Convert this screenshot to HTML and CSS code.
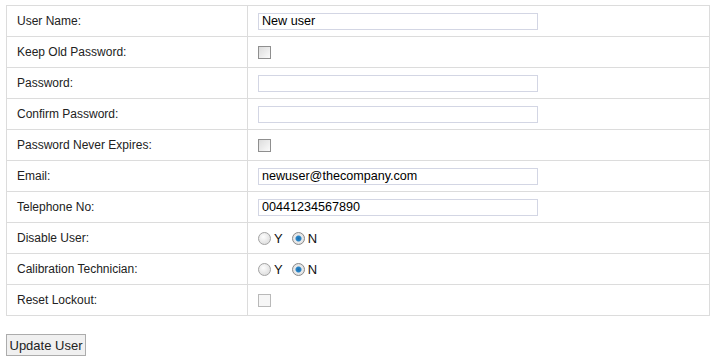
FILE: index.html
```html
<!DOCTYPE html>
<html lang="en">
<head>
  <meta charset="UTF-8" />
  <title>Edit User</title>
  <link rel="stylesheet" href="styles.css">
</head>
<body>

  <form class="user-form">
    <table class="user-table">
      <tr>
        <td class="label">User Name:</td>
        <td><input type="text" class="text-input" value="New user" /></td>
      </tr>
      <tr>
        <td class="label">Keep Old Password:</td>
        <td><input type="checkbox" class="check" /></td>
      </tr>
      <tr>
        <td class="label">Password:</td>
        <td><input type="password" class="text-input" /></td>
      </tr>
      <tr>
        <td class="label">Confirm Password:</td>
        <td><input type="password" class="text-input" /></td>
      </tr>
      <tr>
        <td class="label">Password Never Expires:</td>
        <td><input type="checkbox" class="check" /></td>
      </tr>
      <tr>
        <td class="label">Email:</td>
        <td><input type="text" class="text-input" value="newuser@thecompany.com" /></td>
      </tr>
      <tr>
        <td class="label">Telephone No:</td>
        <td><input type="text" class="text-input" value="00441234567890" /></td>
      </tr>
      <tr>
        <td class="label">Disable User:</td>
        <td>
          <div class="radios">
            <label><input type="radio" name="disable" class="radio" /> Y</label>
            <label><input type="radio" name="disable" class="radio" checked /> N</label>
          </div>
        </td>
      </tr>
      <tr>
        <td class="label">Calibration Technician:</td>
        <td>
          <div class="radios">
            <label><input type="radio" name="calib" class="radio" /> Y</label>
            <label><input type="radio" name="calib" class="radio" checked /> N</label>
          </div>
        </td>
      </tr>
      <tr>
        <td class="label">Reset Lockout:</td>
        <td><input type="checkbox" class="check" disabled /></td>
      </tr>
    </table>

    <button type="button" class="update-btn">Update User</button>
  </form>

</body>
</html>
```

FILE: styles.css
```css
* {
  box-sizing: border-box;
}

body {
  margin: 0;
  padding: 5px 6px;
  font-family: 'Liberation Sans', Arial, sans-serif;
  font-size: 12px;
  color: #222;
  background: #fff;
}

.user-table {
  width: 704px;
  border-collapse: collapse;
}

.user-table td {
  border: 1px solid #dcdcdc;
  height: 31px;
  padding: 0 10px;
  vertical-align: middle;
}

.user-table td.label {
  width: 241px;
}

.text-input {
  display: block;
  width: 280px;
  height: 17px;
  margin: 0;
  padding: 0 3px;
  border: 1px solid #d3d6e4;
  font-family: 'Liberation Sans', Arial, sans-serif;
  font-size: 12.6px;
  color: #000;
  outline: none;
}

.check {
  appearance: none;
  display: block;
  width: 13px;
  height: 13px;
  margin: 1px 0 0;
  border: 1px solid #8f8f8f;
  background: linear-gradient(135deg, #dcdcdc, #fbfbfb);
}

.check:disabled {
  border-color: #b9b9b9;
  background: #f6f6f6;
}

.radios {
  display: flex;
  gap: 9px;
  align-items: center;
}

.radios label {
  display: flex;
  align-items: center;
  gap: 3px;
  font-size: 13px;
  color: #111;
}

.radio {
  appearance: none;
  width: 13px;
  height: 13px;
  margin: 0;
  border-radius: 50%;
  border: 1px solid #a4a4a4;
  background: radial-gradient(circle at 40% 35%, #fdfdfd, #d6d6d6);
}

.radio:checked {
  background: radial-gradient(circle, #1a6fb0 0, #2a85c7 2.5px, #eaeaea 3.5px, #d8d8d8 100%);
  border-color: #8a8a8a;
}

.update-btn {
  display: block;
  margin-top: 18px;
  width: 80px;
  height: 22px;
  padding: 0;
  border: 1px solid #acacac;
  background: #f0f0f0;
  font-family: 'Liberation Sans', Arial, sans-serif;
  font-size: 13px;
  color: #222;
}
```
